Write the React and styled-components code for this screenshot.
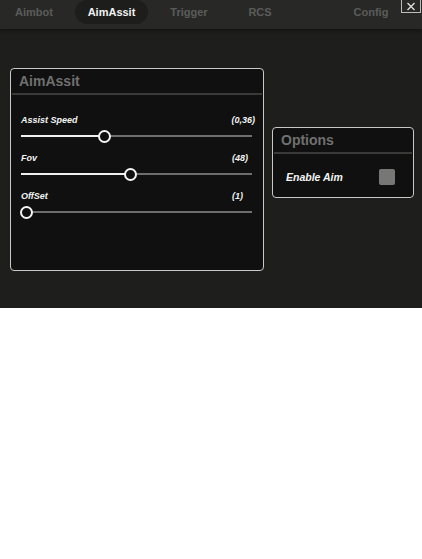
import React from 'react';
import styled, { createGlobalStyle } from 'styled-components';

const GlobalStyle = createGlobalStyle`
  body {
    margin: 0;
    background: #fff;
    font-family: "Liberation Sans", Arial, sans-serif;
  }
`;

const Window = styled.div`
  width: 422px;
  height: 308px;
  background: #1e1f1d;
  display: flex;
  flex-direction: column;
`;

const TopBar = styled.div`
  height: 29px;
  background: #282927;
  display: flex;
  align-items: flex-start;
  box-shadow: 0 2px 3px rgba(0, 0, 0, 0.35);
  position: relative;
`;

const Tab = styled.div`
  height: 24px;
  display: flex;
  align-items: center;
  justify-content: center;
  width: ${p => p.$w}px;
  margin-left: ${p => p.$ml || 0}px;
  border-radius: 12px;
  font-size: 11px;
  font-weight: bold;
  color: ${p => (p.$active ? '#f2f2f2' : '#5b5c5a')};
  background: ${p => (p.$active ? '#1d1e1c' : 'transparent')};
`;

const CloseBtn = styled.div`
  position: absolute;
  right: 1px;
  top: 0;
  width: 18px;
  height: 12px;
  border: 1px solid #bdbdbd;
  border-top: none;
  display: flex;
  align-items: center;
  justify-content: center;
`;

const Content = styled.div`
  flex: 1;
  display: flex;
  align-items: flex-start;
  padding: 39px 0 0 10px;
  gap: 8px;
`;

const Panel = styled.div`
  width: ${p => p.$w}px;
  height: ${p => p.$h}px;
  margin-top: ${p => p.$mt || 0}px;
  box-sizing: border-box;
  border: 1px solid #c8c8c8;
  border-radius: 4px;
  background: #0f100f;
  display: flex;
  flex-direction: column;
`;

const PanelHeader = styled.div`
  height: 24px;
  margin: 0 1px;
  border-bottom: 2px solid #3a3b39;
  display: flex;
  align-items: center;
  padding-left: 7px;
  font-size: 14px;
  font-weight: bold;
  color: #707170;
`;

const SliderList = styled.div`
  display: flex;
  flex-direction: column;
  padding: 20px 10px 0 10px;
  gap: 8px;
`;

const SliderRow = styled.div`
  display: flex;
  flex-direction: column;
`;

const LabelLine = styled.div`
  display: flex;
  justify-content: space-between;
  font-size: 9px;
  font-weight: bold;
  font-style: italic;
  color: #f4f4f4;
  height: 12px;
  margin-right: -2px;
  padding-right: ${p => p.$pr || 0}px;
`;

const Track = styled.div`
  position: relative;
  height: 18px;
  margin-right: 1px;
`;

const Rail = styled.div`
  position: absolute;
  left: 0;
  right: 0;
  top: 8px;
  height: 2px;
  background: #6e6f6d;
`;

const Fill = styled.div`
  position: absolute;
  left: 0;
  top: 8px;
  height: 2px;
  background: #f0f0f0;
`;

const Thumb = styled.div`
  position: absolute;
  top: 3px;
  width: 13px;
  height: 13px;
  box-sizing: border-box;
  margin-left: -6px;
  border-radius: 50%;
  border: 2px solid #f4f4f4;
  background: #0f100f;
`;

const OptionRow = styled.div`
  display: flex;
  align-items: center;
  justify-content: space-between;
  padding: 15px 18px 0 13px;
  font-size: 10.5px;
  font-weight: bold;
  font-style: italic;
  color: #f4f4f4;
`;

const CheckBox = styled.div`
  width: 16px;
  height: 16px;
  border-radius: 2px;
  background: #777876;
`;

function Slider({ label, value, pos, pr }) {
  return (
    <SliderRow>
      <LabelLine $pr={pr}>
        <span>{label}</span>
        <span>{value}</span>
      </LabelLine>
      <Track>
        <Rail />
        <Fill style={{ width: pos }} />
        <Thumb style={{ left: pos }} />
      </Track>
    </SliderRow>
  );
}

export default function App() {
  return (
    <>
      <GlobalStyle />
      <Window>
        <TopBar>
          <Tab $w={56} $ml={6}>Aimbot</Tab>
          <Tab $w={73} $ml={13} $active>AimAssit</Tab>
          <Tab $w={56} $ml={13}>Trigger</Tab>
          <Tab $w={56} $ml={15}>RCS</Tab>
          <Tab $w={56} $ml={55}>Config</Tab>
          <CloseBtn>
            <svg width="10" height="9" viewBox="0 0 10 9">
              <path d="M1.5 1L8.5 8M8.5 1L1.5 8" stroke="#e0e0e0" strokeWidth="1.3" />
            </svg>
          </CloseBtn>
        </TopBar>
        <Content>
          <Panel $w={254} $h={203}>
            <PanelHeader>AimAssit</PanelHeader>
            <SliderList>
              <Slider label="Assist Speed" value="(0,36)" pos={83} />
              <Slider label="Fov" value="(48)" pos={109} pr={7} />
              <Slider label="OffSet" value="(1)" pos={5} pr={12} />
            </SliderList>
          </Panel>
          <Panel $w={142} $h={71} $mt={59}>
            <PanelHeader>Options</PanelHeader>
            <OptionRow>
              <span>Enable Aim</span>
              <CheckBox />
            </OptionRow>
          </Panel>
        </Content>
      </Window>
    </>
  );
}
